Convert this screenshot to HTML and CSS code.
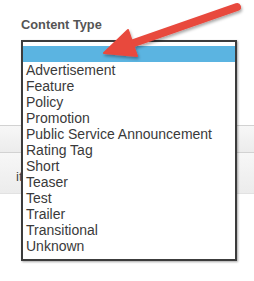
FILE: index.html
```html
<!DOCTYPE html>
<html lang="en">
<head>
    <meta charset="UTF-8">
    <title>Content Type</title>
    <link rel="stylesheet" href="styles.css">
</head>
<body>
    <div class="field">
        <div class="field-label">Content Type</div>

        <div class="grid">
            <div class="grid-row head"></div>
            <div class="grid-row body"><span class="cell">item</span></div>
        </div>

        <div class="listbox">
            <div class="option selected">&nbsp;</div>
            <div class="option">Advertisement</div>
            <div class="option">Feature</div>
            <div class="option">Policy</div>
            <div class="option">Promotion</div>
            <div class="option">Public Service Announcement</div>
            <div class="option">Rating Tag</div>
            <div class="option">Short</div>
            <div class="option">Teaser</div>
            <div class="option">Test</div>
            <div class="option">Trailer</div>
            <div class="option">Transitional</div>
            <div class="option">Unknown</div>
        </div>
    </div>

    <!-- annotation arrow -->
    <svg class="arrow" width="254" height="70" viewBox="0 0 254 70">
        <defs>
            <filter id="shadow" x="-20%" y="-40%" width="140%" height="180%">
                <feDropShadow dx="1" dy="2" stdDeviation="1.5" flood-color="#000" flood-opacity="0.35"/>
            </filter>
        </defs>
        <g filter="url(#shadow)" fill="#e8483e" stroke="#e8483e">
            <line x1="237" y1="7" x2="128" y2="45" stroke-width="8" stroke-linecap="round"/>
            <polygon points="104,53 128,30 137,56" stroke-width="2" stroke-linejoin="round"/>
        </g>
    </svg>
</body>
</html>
```

FILE: styles.css
```css
body {
    margin: 0;
    background: #fff;
    font-family: "Liberation Sans", Arial, sans-serif;
    color: #333;
}

.field {
    position: relative;
    padding-top: 17px;
    height: 281px;
    box-sizing: border-box;
}

.field-label {
    padding-left: 21px;
    font-size: 12.8px;
    font-weight: bold;
    line-height: 16px;
    color: #555;
}

.grid {
    margin-top: 92px;
}

.grid-row {
    border-top: 1px solid #d2d2d2;
    background: linear-gradient(#f7f7f7, #ececec);
}

.grid-row.head {
    height: 26px;
}

.grid-row.body {
    height: 42px;
    border-bottom: 1px solid #e2e2e2;
    display: flex;
    align-items: center;
    padding-left: 16px;
    padding-top: 6px;
    box-sizing: border-box;
}

/* only the start of the cell shows left of the open list */
.cell {
    width: 5px;
    overflow: hidden;
    white-space: nowrap;
    font-size: 13px;
    color: #444;
}

.listbox {
    position: absolute;
    left: 21px;
    top: 40px;
    width: 216px;
    box-sizing: border-box;
    padding: 4px 0 5px;
    background: #fff;
    border: 2px solid #3c3c3c;
    box-shadow: 1px 1px 2px rgba(0, 0, 0, 0.35);
}

.option {
    padding-left: 3px;
    font-size: 14px;
    line-height: 16px;
    color: #3a3a3a;
    white-space: nowrap;
}

.option.selected {
    background: #5bb4e1;
}

.arrow {
    position: absolute;
    left: 0;
    top: 0;
}
```
